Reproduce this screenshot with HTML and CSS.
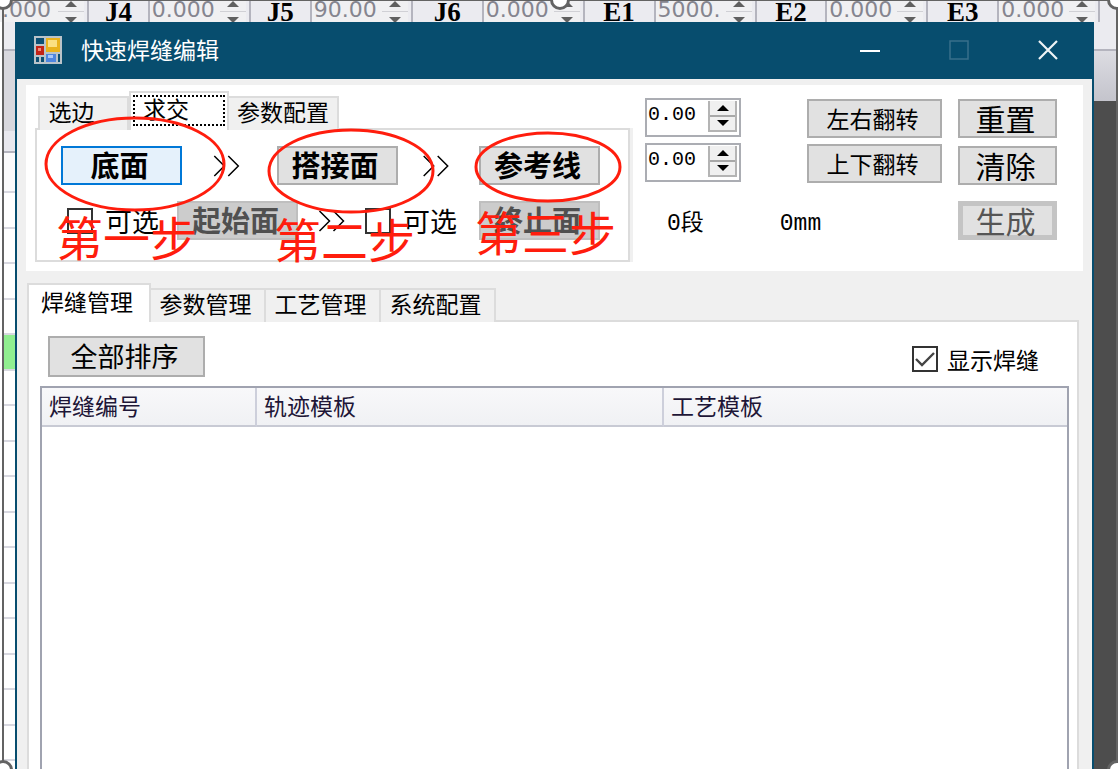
FILE: index.html
```html
<!DOCTYPE html>
<html lang="zh-CN">
<head>
    <meta charset="UTF-8">
    <meta name="viewport" content="width=device-width, initial-scale=1.0">
    <title>快速焊缝编辑</title>
    <link rel="stylesheet" href="styles.css">
</head>
<body>

    <!-- Axis values of the main window -->
    <div class="axis-bar">
        <div class="axis axis-first">
            <input type="text" value=".000" aria-label="J3">
            <span class="axis-arrows"><i class="up"></i><i class="down"></i></span>
        </div>
        <div class="axis axis-narrow">
            <label for="j4">J4</label>
            <input type="text" id="j4" value="0.000">
            <span class="axis-arrows"><i class="up"></i><i class="down"></i></span>
        </div>
        <div class="axis axis-narrow">
            <label for="j5">J5</label>
            <input type="text" id="j5" value="90.00">
            <span class="axis-arrows"><i class="up"></i><i class="down"></i></span>
        </div>
        <div class="axis">
            <label for="j6">J6</label>
            <input type="text" id="j6" value="0.000">
            <span class="axis-arrows"><i class="up"></i><i class="down"></i></span>
        </div>
        <div class="axis">
            <label for="e1">E1</label>
            <input type="text" id="e1" value="5000.">
            <span class="axis-arrows"><i class="up"></i><i class="down"></i></span>
        </div>
        <div class="axis">
            <label for="e2">E2</label>
            <input type="text" id="e2" value="0.000">
            <span class="axis-arrows"><i class="up"></i><i class="down"></i></span>
        </div>
        <div class="axis">
            <label for="e3">E3</label>
            <input type="text" id="e3" value="0.000">
            <span class="axis-arrows"><i class="up"></i><i class="down"></i></span>
        </div>
        <div class="axis-end"></div>
    </div>

    <div class="main">
        <div class="left-strip">
            <div class="strip-head"></div>
            <div class="strip-grey"></div>
            <div class="strip-title"></div>
            <div class="strip-top-row"></div>
            <div class="row"></div>
            <div class="row"></div>
            <div class="row"></div>
            <div class="row"></div>
            <div class="row selected"></div>
            <div class="row"></div>
            <div class="row"></div>
            <div class="row"></div>
            <div class="row"></div>
            <div class="row"></div>
            <div class="row"></div>
            <div class="row"></div>
            <div class="row"></div>
            <div class="row"></div>
            <div class="row"></div>
            <div class="row"></div>
            <div class="row"></div>
        </div>

        <div class="dialog">
            <div class="title-bar">
                <svg class="app-icon" width="28" height="28" viewBox="0 0 28 28">
                    <rect x="0" y="0" width="28" height="28" fill="#b9c3c9"/>
                    <rect x="2" y="2" width="8" height="6" fill="#0b4f74"/>
                    <rect x="2" y="10" width="8" height="9" fill="#c32317"/>
                    <rect x="4" y="12" width="3" height="3" fill="#f08a7c"/>
                    <rect x="12" y="2" width="14" height="14" fill="#e9b21d"/>
                    <rect x="14" y="4" width="9" height="7" fill="#fbe083"/>
                    <rect x="2" y="21" width="3" height="5" fill="#0b4f74"/>
                    <rect x="7" y="21" width="3" height="5" fill="#0b4f74"/>
                    <rect x="12" y="18" width="10" height="8" fill="#4f86e0"/>
                    <rect x="14" y="19" width="5" height="3" fill="#a9c8fa"/>
                    <rect x="24" y="18" width="2" height="8" fill="#0b4f74"/>
                </svg>
                <span class="title">快速焊缝编辑</span>
                <div class="window-buttons">
                    <button aria-label="最小化">
                        <svg width="20" height="20" viewBox="0 0 20 20"><path d="M0 11H20" stroke="#fff" stroke-width="2"/></svg>
                    </button>
                    <button aria-label="最大化" disabled>
                        <svg width="20" height="20" viewBox="0 0 20 20"><rect x="1" y="1" width="18" height="18" fill="none" stroke="#396f8b" stroke-width="1.5"/></svg>
                    </button>
                    <button aria-label="关闭">
                        <svg width="20" height="20" viewBox="0 0 20 20"><path d="M1 1L19 19M19 1L1 19" stroke="#f0f4f6" stroke-width="2.2"/></svg>
                    </button>
                </div>
            </div>

            <div class="content">
                <div class="top-panel">
                    <div class="pick">
                        <div class="tabs pick-tabs">
                            <button class="tab tab-edge">选边</button>
                            <button class="tab tab-cross active"><span class="focus">求交</span></button>
                            <button class="tab tab-config">参数配置</button>
                        </div>
                        <div class="pick-page">
                            <div class="pick-row faces">
                                <button class="face current">底面</button>
                                <svg class="next next-wide" viewBox="0 0 26 22"><path d="M1 1L11 11L1 21M15 1L25 11L15 21"/></svg>
                                <button class="face">搭接面</button>
                                <svg class="next" viewBox="0 0 26 22"><path d="M1 1L11 11L1 21M15 1L25 11L15 21"/></svg>
                                <button class="face">参考线</button>
                            </div>
                            <div class="pick-row">
                                <label class="check check-start"><input type="checkbox">可选</label>
                                <button class="face" disabled>起始面</button>
                                <svg class="next" viewBox="0 0 26 22"><path d="M1 1L11 11L1 21M15 1L25 11L15 21"/></svg>
                                <label class="check check-end"><input type="checkbox">可选</label>
                                <button class="face" disabled>终止面</button>
                            </div>
                            <!-- Step marks drawn over the controls -->
                            <svg class="rings" width="600" height="100" viewBox="0 0 600 100">
                                <ellipse cx="98" cy="34" rx="89" ry="46"/>
                                <ellipse cx="314" cy="41" rx="82" ry="41"/>
                                <ellipse cx="511" cy="37" rx="72" ry="34"/>
                            </svg>
                            <span class="step step-1">第一步</span>
                            <span class="step step-2">第二步</span>
                            <span class="step step-3">第三步</span>
                        </div>
                    </div>

                    <div class="values">
                        <div class="spinner">
                            <input type="text" value="0.00" aria-label="起点偏移">
                            <span class="spinner-buttons">
                                <button aria-label="增加"><i class="up"></i></button>
                                <button aria-label="减少"><i class="down"></i></button>
                            </span>
                        </div>
                        <div class="spinner">
                            <input type="text" value="0.00" aria-label="终点偏移">
                            <span class="spinner-buttons">
                                <button aria-label="增加"><i class="up"></i></button>
                                <button aria-label="减少"><i class="down"></i></button>
                            </span>
                        </div>
                        <div class="totals">
                            <span>0段</span>
                            <span>0mm</span>
                        </div>
                    </div>

                    <div class="flip">
                        <button class="btn">左右翻转</button>
                        <button class="btn">上下翻转</button>
                    </div>

                    <div class="actions">
                        <button class="btn big">重置</button>
                        <button class="btn big">清除</button>
                        <button class="btn big generate" disabled>生成</button>
                    </div>
                </div>

                <div class="tabs manage-tabs">
                    <button class="tab active">焊缝管理</button>
                    <button class="tab">参数管理</button>
                    <button class="tab">工艺管理</button>
                    <button class="tab">系统配置</button>
                </div>
                <div class="manage-page">
                    <div class="toolbar">
                        <button class="btn sort">全部排序</button>
                        <label class="check show-seam"><input type="checkbox" checked>显示焊缝</label>
                    </div>
                    <div class="seam-list">
                        <table>
                            <thead>
                                <tr>
                                    <th class="col-number">焊缝编号</th>
                                    <th class="col-track">轨迹模板</th>
                                    <th>工艺模板</th>
                                </tr>
                            </thead>
                        </table>
                    </div>
                </div>
            </div>
        </div>

        <div class="right-strip">
            <div class="strip-head"></div>
            <div class="strip-grey"></div>
        </div>
    </div>

    <!-- Selection frame with its round handles -->
    <div class="frame">
        <i class="handle top-left"></i>
        <i class="handle top-middle"></i>
        <i class="handle top-right"></i>
        <i class="handle bottom-left"></i>
        <i class="handle bottom-right"></i>
    </div>

</body>
</html>
```

FILE: styles.css
```css
* {
    box-sizing: border-box;
}

body {
    margin: 0;
    height: 100vh;
    display: flex;
    flex-direction: column;
    overflow: hidden;
    position: relative;
    background: #fff;
    color: #000;
    font-family: "Liberation Mono", "Noto Sans CJK SC", monospace;
    font-size: 23px;
    line-height: 28px;
}

button, input {
    font: inherit;
    color: inherit;
    margin: 0;
    padding: 0;
    border-radius: 0;
}

button {
    display: flex;
    align-items: center;
    justify-content: center;
    white-space: nowrap;
    font-family: "Noto Sans CJK SC", sans-serif;
}

/* Arrow triangles */
.up, .down {
    border-left: 6px solid transparent;
    border-right: 6px solid transparent;
}

.up {
    border-bottom: 6px solid currentColor;
}

.down {
    border-top: 6px solid currentColor;
}

/* Axis bar */
.axis-bar {
    display: flex;
    flex: none;
    height: 22px;
    overflow: hidden;
    background: #ebebf0;
}

.axis {
    display: flex;
    flex: 172 1 0;
    min-width: 0;
    height: 32px;
    border-right: 2px solid #b4b4be;
}

.axis-narrow {
    flex-grow: 162;
}

.axis-first {
    flex-grow: 88;
}

.axis-end {
    flex: 18 1 0;
}

.axis label {
    flex: 1;
    text-align: center;
    font: bold 27px/24px "Liberation Serif", serif;
}

.axis input {
    width: 72px;
    height: 22px;
    padding: 0 0 3px 2px;
    border: 0;
    border-left: 2px solid #b4b4be;
    background: #f0f0f2;
    color: #85858f;
    font: 22px/18px "DejaVu Sans", sans-serif;
}

.axis-first input {
    flex: 1;
    min-width: 0;
    border-left: 0;
}

.axis-arrows {
    display: flex;
    flex-direction: column;
    align-items: center;
    width: 26px;
    margin-right: 3px;
    padding-top: 1px;
    gap: 10px;
    background: linear-gradient(#f0f0f2 11px, #d0d0d5 11px, #d0d0d5 12px, #f0f0f2 12px);
    color: #606060;
}

/* Area below the bar */
.main {
    flex: 1;
    min-height: 0;
    display: flex;
}

.left-strip {
    width: 15px;
    padding-left: 2px;
    overflow: hidden;
}

.strip-head {
    height: 29px;
    background: #ebebf0;
    border-bottom: 2px solid #b4b4be;
}

.strip-grey {
    height: 80px;
    background: #d8d8de;
}

.strip-title {
    height: 22px;
    background: #e8e8ee;
    border-bottom: 2px solid #b4b4be;
}

.strip-top-row {
    height: 40px;
    background: #fafafb;
    border-bottom: 2px solid #d8d8e0;
}

.row {
    height: 35px;
    border-bottom: 2px solid #d8d8e0;
}

.row:nth-child(odd) {
    height: 36px;
}

.row.selected {
    background: #90ee90;
}

.right-strip {
    width: 24px;
    background: #4d4d4d;
}

.right-strip .strip-grey {
    height: 50px;
    background: linear-gradient(#dcdce2, #c4c4cc);
}

/* Dialog */
.dialog {
    flex: 1;
    min-width: 0;
    display: flex;
    flex-direction: column;
    border: solid #074d6e;
    border-width: 0 2px;
    background: #f0f0f0;
}

.title-bar {
    display: flex;
    align-items: center;
    height: 57px;
    padding: 0 0 2px 17px;
    background: #074d6e;
    color: #fff;
}

.title {
    flex: 1;
    margin-left: 19px;
    padding-top: 6px;
}

.window-buttons {
    display: flex;
}

.window-buttons button {
    width: 89px;
    height: 55px;
    border: 0;
    background: none;
}

.content {
    flex: 1;
    min-height: 0;
    display: flex;
    flex-direction: column;
    padding: 6px 9px 0;
}

.top-panel {
    display: flex;
    height: 186px;
    padding: 6px 26px 8px 9px;
    background: #fff;
}

/* Tabs */
.tabs {
    display: flex;
    align-items: flex-end;
    position: relative;
    z-index: 1;
}

.tab {
    height: 34px;
    padding-bottom: 6px;
    border: 2px solid #dcdcdc;
    border-left-width: 0;
    border-bottom-width: 0;
    background: #f0f0f0;
}

.tab:first-child {
    border-left-width: 2px;
}

.tab.active {
    height: 39px;
    border-left-width: 2px;
    background: #fff;
}

.pick {
    flex: none;
    width: 595px;
}

.pick-tabs {
    height: 39px;
    margin-bottom: -2px;
    padding-left: 3px;
}

.tab-edge {
    width: 91px;
    padding-right: 24px;
}

.tab-cross {
    width: 100px;
}

.tab-cross.active {
    padding-bottom: 2px;
}

.focus {
    width: 92px;
    height: 31px;
    padding-right: 26px;
    border: 2px dotted #000;
    line-height: 22px;
}

.tab-config {
    width: 110px;
}

.pick-page {
    position: relative;
    display: flex;
    flex-direction: column;
    gap: 16px;
    height: 134px;
    padding: 16px 28px 0 24px;
    border: 2px solid #dcdcdc;
    box-shadow: 3px 0 #f0f0f0;
}

.pick-row {
    display: flex;
    align-items: center;
}

.next {
    flex: 80 1 0;
    min-width: 0;
    height: 22px;
    fill: none;
    stroke: #000;
    stroke-width: 1.5;
}

.next-wide {
    flex-grow: 94;
}

.faces .next {
    padding-right: 6px;
}

.face {
    width: 121px;
    height: 39px;
    padding-bottom: 4px;
    padding-right: 4px;
    border: 2px solid #adadad;
    background: #e1e1e1;
    font-size: 29px;
    font-weight: bold;
}

.face.current {
    border-color: #0078d7;
    background: #e5f1fb;
}

.face:disabled {
    border-color: #bfbfbf;
    background: #ccc;
    color: #505050;
}

.check {
    display: flex;
    align-items: center;
    gap: 12px;
    font-family: "Noto Sans CJK SC", sans-serif;
    font-size: 27px;
    line-height: 34px;
    white-space: nowrap;
}

.check-start {
    width: 116px;
    padding-left: 6px;
}

.check-end {
    width: 114px;
}

.check input {
    appearance: none;
    flex: none;
    width: 26px;
    height: 26px;
    border: 2px solid #333;
    background: #fff;
}

.check input:checked {
    background: #fff url("data:image/svg+xml,%3Csvg xmlns='http://www.w3.org/2000/svg' viewBox='0 0 22 22'%3E%3Cpath d='M2 11L8 17L20 5' fill='none' stroke='%23444' stroke-width='2.4'/%3E%3C/svg%3E") center / 22px no-repeat;
}

/* Red step marks */
.rings {
    position: absolute;
    left: 0;
    top: 0;
    overflow: visible;
    pointer-events: none;
    z-index: 2;
    fill: none;
    stroke: #ff1d0d;
    stroke-width: 3;
}

.step {
    position: absolute;
    z-index: 2;
    color: #ff1d0d;
    font: 47px/48px "Noto Sans CJK SC", sans-serif;
    white-space: nowrap;
    pointer-events: none;
}

.step-1 {
    left: 19px;
    top: 82px;
}

.step-2 {
    left: 237px;
    top: 84px;
}

.step-3 {
    left: 438px;
    top: 77px;
}

/* Offsets and totals */
.values {
    flex: 1;
    min-width: 0;
    display: flex;
    flex-direction: column;
    align-items: flex-start;
    gap: 6px;
    padding: 7px 0 0 15px;
}

.spinner {
    display: flex;
    width: 96px;
    height: 39px;
    padding: 1px 2px 3px 1px;
    border: 2px solid #abadb3;
    background: #fff;
}

.spinner input {
    flex: 1;
    min-width: 0;
    height: 27px;
    border: 0;
    background: none;
    font-size: 20px;
}

.spinner-buttons {
    display: flex;
    flex-direction: column;
    gap: 2px;
    width: 29px;
    border: 2px solid #b4b4b4;
    border-top: 0;
    background: #a8a8a8;
}

.spinner-buttons button {
    flex: 1;
    border: 0;
    background: #f0f0f0;
}

.totals {
    display: flex;
    gap: 76px;
    padding: 22px 0 0 22px;
    white-space: nowrap;
}

.flip, .actions {
    display: flex;
    flex-direction: column;
    gap: 6px;
    padding-top: 8px;
}

.actions {
    gap: 8px;
    margin-left: 16px;
}

/* Push buttons */
.btn {
    width: 135px;
    height: 39px;
    padding: 0 4px 2px 0;
    border: 2px solid #adadad;
    background: #e1e1e1;
}

.btn.big {
    width: 99px;
    font-size: 30px;
}

.btn.generate {
    margin-top: 8px;
    border: 5px solid #c4c4c4;
    color: #555;
}

/* Management tabs */
.manage-tabs {
    height: 39px;
    margin: 12px 0 -2px 1px;
}

.manage-tabs .tab {
    width: 115px;
    height: 34px;
    padding-right: 4px;
}

.manage-tabs .tab.active {
    width: 124px;
    height: 39px;
}

.manage-page {
    flex: 1;
    min-height: 0;
    display: flex;
    flex-direction: column;
    margin: 0 4px 0 1px;
    padding: 14px 8px 0 11px;
    border: 2px solid #dcdcdc;
    border-bottom: 0;
    background: #fff;
}

.toolbar {
    display: flex;
    align-items: center;
    justify-content: space-between;
    padding: 0 30px 0 8px;
}

.btn.sort {
    width: 157px;
    height: 41px;
    font-size: 27px;
}

.show-seam {
    gap: 9px;
    padding-top: 5px;
    font-size: 23px;
}

.seam-list {
    flex: 1;
    margin-top: 9px;
    border: 2px solid #a0a3b0;
    border-bottom: 0;
}

table {
    width: 100%;
    table-layout: fixed;
    border-collapse: separate;
    border-spacing: 0;
}

th {
    height: 39px;
    padding: 4px 7px 0;
    border-right: 2px solid #cdcfdb;
    border-bottom: 2px solid #c8cad4;
    background: linear-gradient(#f8f8fa, #f0f1f4);
    color: #1e1637;
    font-weight: normal;
    text-align: left;
}

th:last-child {
    border-right: 0;
}

.col-number {
    width: 215px;
}

.col-track {
    width: 407px;
}

/* Selection frame */
.frame {
    position: absolute;
    inset: 0 0 0 2px;
    border: 2px solid #636363;
    border-top-width: 1px;
    border-bottom: 0;
    pointer-events: none;
    z-index: 5;
}

.handle {
    position: absolute;
    width: 20px;
    height: 20px;
    border: 3px solid #636363;
    border-radius: 50%;
    background: #fff;
}

.top-left {
    left: -11px;
    top: -11px;
}

.top-middle {
    left: 50%;
    top: -11px;
    margin-left: -10px;
}

.top-right {
    right: -11px;
    top: -11px;
}

.bottom-left {
    left: -11px;
    bottom: -11px;
}

.bottom-right {
    right: -11px;
    bottom: -11px;
}
```
